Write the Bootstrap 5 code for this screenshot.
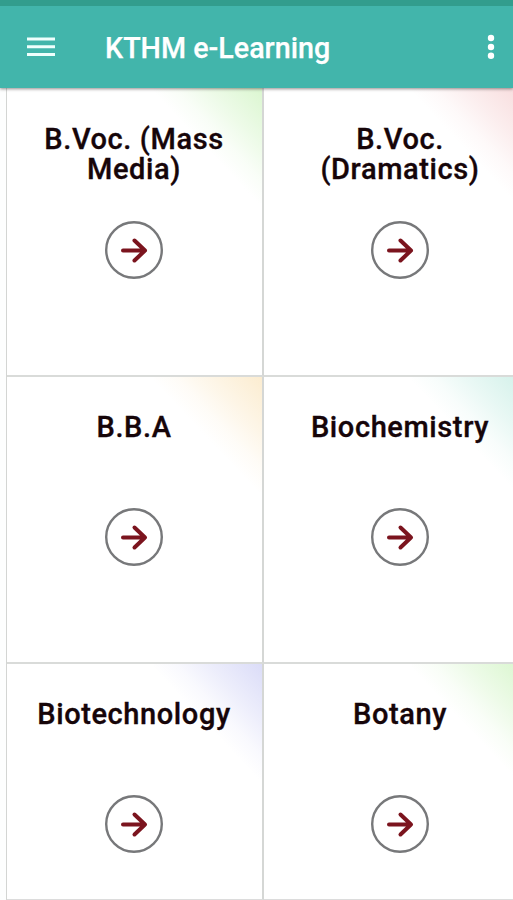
<!DOCTYPE html>
<html lang="en">
<head>
<meta charset="utf-8">
<meta name="viewport" content="width=device-width, initial-scale=1">
<title>KTHM e-Learning</title>
<link rel="stylesheet" href="https://cdn.jsdelivr.net/npm/bootstrap@5.3.0/dist/css/bootstrap.min.css">
<style>
body{font-family:Roboto,"Liberation Sans",sans-serif;background:#fdfefe}
.screen{height:900px}
.appbar{height:88px;background:#42b5ab;border-top:6px solid #329d8d;box-shadow:0 1px 3px rgba(60,50,50,.55);z-index:2;padding:0 13px 0 26px!important}
.appbar .title{font-size:28.7px;font-weight:500;line-height:32px;color:#fff;margin:2px 0 0 49px;white-space:nowrap;-webkit-text-stroke:.25px #fff}
.tiles{display:grid;grid-template-columns:257px 250px;grid-template-rows:289px 287px 236px;margin-left:6px;border-left:1px solid #d3d5d3}
.tile{--glow:205,243,190;background:linear-gradient(to bottom left,rgba(var(--glow),.72) 0,rgba(var(--glow),.36) 25%,rgba(var(--glow),.12) 40%,rgba(var(--glow),0) 52%) no-repeat right top/108px 115px #fff;border-bottom:2px solid #d9dbd9;padding-top:35px;padding-right:1px}
.tile:nth-child(odd){border-right:2px solid #d5d7d5}
.tile:nth-child(even){padding-left:23px;background-position:right -6px top}
.first-row{padding-top:36px}
.last-row{border-bottom:1px solid #dcdcdc}
.glow-red{--glow:245,207,208}.glow-gold{--glow:250,229,190}.glow-teal{--glow:195,236,226}.glow-blue{--glow:205,207,245}
.tile h2{font-size:29px;line-height:30px;font-weight:500;color:#160509;height:60px;letter-spacing:.6px;margin-bottom:36px;-webkit-text-stroke:.35px #160509}
.first-row h2{margin-bottom:37px}
.go{width:58px;height:58px}
</style>
<script src="https://cdn.jsdelivr.net/npm/bootstrap@5.3.0/dist/js/bootstrap.bundle.min.js"></script>
</head>
<body>
<svg class="d-none"><symbol id="go" viewBox="0 0 58 58"><circle cx="29" cy="29" r="27.8" fill="#fff" stroke="#77787a" stroke-width="2.4"/><path d="M18 29.5H40M29.5 19.5L40 29.5L29.5 39.5" fill="none" stroke="#7b141e" stroke-width="4" stroke-linecap="round" stroke-linejoin="round"/></symbol></svg>
<div class="screen d-flex flex-column overflow-hidden">
<header class="appbar navbar flex-nowrap justify-content-start position-relative flex-shrink-0">
<svg width="30" height="22" viewBox="0 0 30 22" aria-label="Menu"><path d="M1 3H29M1 10.8H29M1 18.6H29" stroke="#effffd" stroke-width="3"/></svg>
<span class="title">KTHM e-Learning</span>
<svg class="ms-auto" width="18" height="28" viewBox="0 0 18 28" aria-label="More options"><g fill="#fff"><circle cx="9" cy="5" r="3.2"/><circle cx="9" cy="14" r="3.2"/><circle cx="9" cy="22.8" r="3.2"/></g></svg>
</header>
<main class="tiles text-center">
<section class="tile first-row"><h2>B.Voc. (Mass<br>Media)</h2><svg class="go"><use href="#go"/></svg></section>
<section class="tile first-row glow-red"><h2>B.Voc.<br>(Dramatics)</h2><svg class="go"><use href="#go"/></svg></section>
<section class="tile glow-gold"><h2>B.B.A</h2><svg class="go"><use href="#go"/></svg></section>
<section class="tile glow-teal"><h2>Biochemistry</h2><svg class="go"><use href="#go"/></svg></section>
<section class="tile last-row glow-blue"><h2>Biotechnology</h2><svg class="go"><use href="#go"/></svg></section>
<section class="tile last-row"><h2>Botany</h2><svg class="go"><use href="#go"/></svg></section>
</main>
</div>
</body>
</html>
